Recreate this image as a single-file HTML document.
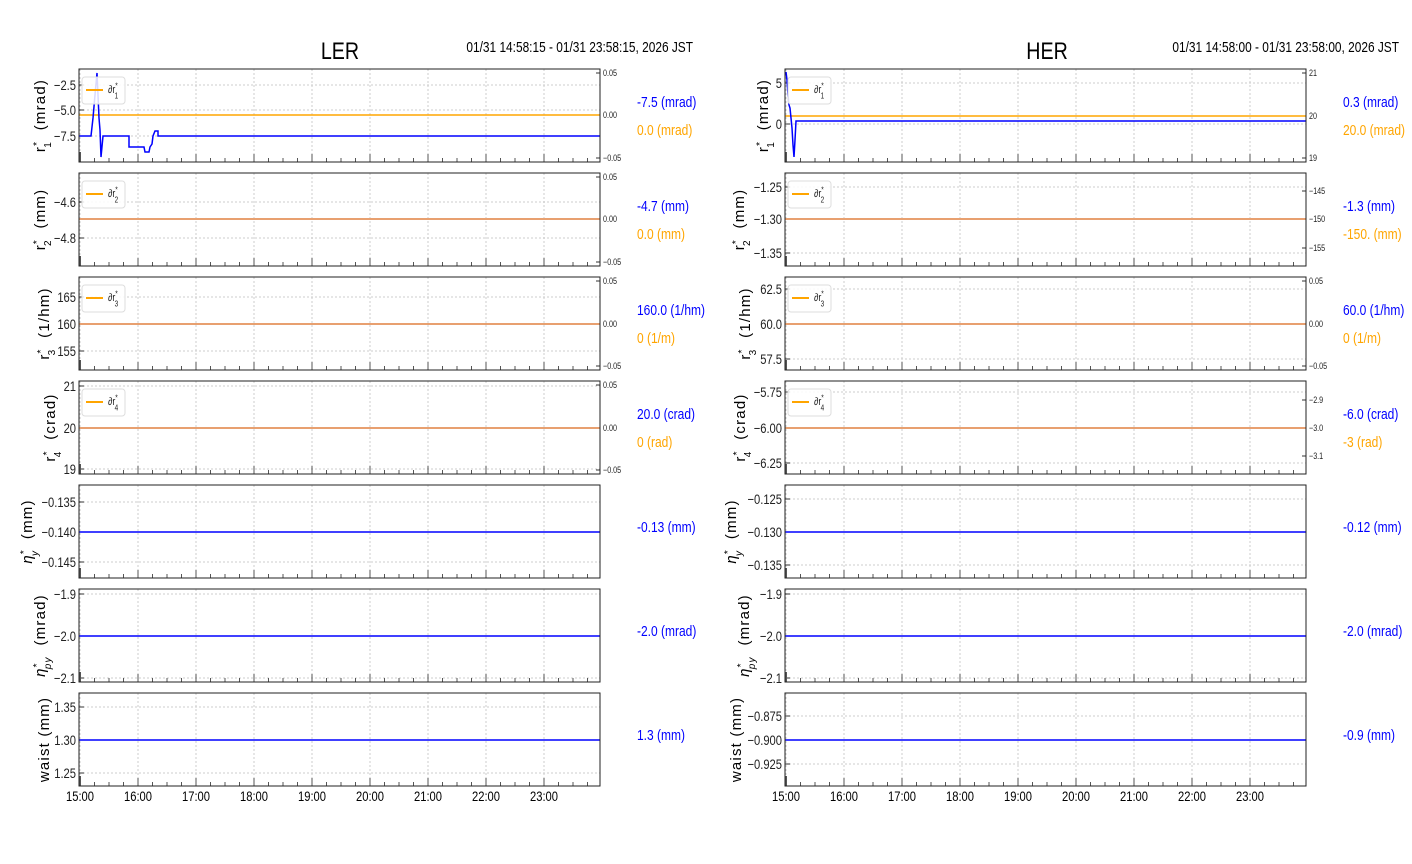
<!DOCTYPE html>
<html><head><meta charset="utf-8"><style>
html,body{margin:0;padding:0;background:#fff;width:1412px;height:864px;overflow:hidden}
svg text{font-family:"Liberation Sans",sans-serif}
</style></head><body>
<svg id="s" width="1412" height="864" xmlns="http://www.w3.org/2000/svg"></svg>
<script>
const S=document.getElementById('s');let h='';
function T(x,y,s,fs,anc,fill,sx){sx=sx||0.8;return `<g transform="translate(${x},${y}) scale(${sx},1)"><text x="0" y="0" font-size="${fs}" text-anchor="${anc||'start'}" fill="${fill||'#222'}">${s}</text></g>`;}
const tops=[69,173,277,381,485,589,693],H=93;
const sup='<tspan baseline-shift="super" font-size="10">*</tspan>';
function sub(n,it){return `<tspan dx="-7" baseline-shift="sub" font-size="10"${it?' font-style="italic"':''}>${n}</tspan>`;}
const sides=[
 {x0:79,x1:600,hx:80,title:'LER',tx:340,time:'01/31 14:58:15 - 01/31 23:58:15, 2026 JST',timex:693,vx:637,lxs:[40,40,44,50,27,40,44],
  p:[
   {lab:'r'+sup+sub(1)+'  (mrad)',yt:[['−2.5',85],['−5.0',110],['−7.5',136]],rt:[['0.05',73],['0.00',115],['−0.05',158]],leg:1,ly:115,v1:'-7.5 (mrad)',v2:'0.0 (mrad)'},
   {lab:'r'+sup+sub(2)+'  (mm)',yt:[['−4.6',202],['−4.8',238]],rt:[['0.05',177],['0.00',219],['−0.05',262]],leg:2,ly:219,v1:'-4.7 (mm)',v2:'0.0 (mm)'},
   {lab:'r'+sup+sub(3)+'  (1/hm)',yt:[['165',297],['160',324],['155',351]],rt:[['0.05',281],['0.00',324],['−0.05',366]],leg:3,ly:324,v1:'160.0 (1/hm)',v2:'0 (1/m)'},
   {lab:'r'+sup+sub(4)+'  (crad)',yt:[['21',386],['20',428],['19',469]],rt:[['0.05',385],['0.00',428],['−0.05',470]],leg:4,ly:428,v1:'20.0 (crad)',v2:'0 (rad)'},
   {lab:'<tspan font-style="italic">η</tspan>'+sup+sub('y',1)+'  (mm)',yt:[['−0.135',502],['−0.140',532],['−0.145',562]],by:532,v1:'-0.13 (mm)'},
   {lab:'<tspan font-style="italic">η</tspan>'+sup+sub('py',1)+'  (mrad)',yt:[['−1.9',594],['−2.0',636],['−2.1',678]],by:636,v1:'-2.0 (mrad)'},
   {lab:'waist (mm)',yt:[['1.35',707],['1.30',740],['1.25',773]],by:740,v1:'1.3 (mm)'}]},
 {x0:785,x1:1306,hx:786,title:'HER',tx:1047,time:'01/31 14:58:00 - 01/31 23:58:00, 2026 JST',timex:1399,vx:1343,lxs:[763,739,745,740,731,744,736],
  p:[
   {lab:'r'+sup+sub(1)+'  (mrad)',yt:[['5',83],['0',124]],rt:[['21',73],['20',116],['19',158]],leg:1,ly:116,v1:'0.3 (mrad)',v2:'20.0 (mrad)'},
   {lab:'r'+sup+sub(2)+'  (mm)',yt:[['−1.25',187],['−1.30',219],['−1.35',253]],rt:[['−145',191],['−150',219],['−155',248]],leg:2,ly:219,v1:'-1.3 (mm)',v2:'-150. (mm)'},
   {lab:'r'+sup+sub(3)+'  (1/hm)',yt:[['62.5',289],['60.0',324],['57.5',359]],rt:[['0.05',281],['0.00',324],['−0.05',366]],leg:3,ly:324,v1:'60.0 (1/hm)',v2:'0 (1/m)'},
   {lab:'r'+sup+sub(4)+'  (crad)',yt:[['−5.75',392],['−6.00',428],['−6.25',463]],rt:[['−2.9',400],['−3.0',428],['−3.1',456]],leg:4,ly:428,v1:'-6.0 (crad)',v2:'-3 (rad)'},
   {lab:'<tspan font-style="italic">η</tspan>'+sup+sub('y',1)+'  (mm)',yt:[['−0.125',499],['−0.130',532],['−0.135',565]],by:532,v1:'-0.12 (mm)'},
   {lab:'<tspan font-style="italic">η</tspan>'+sup+sub('py',1)+'  (mrad)',yt:[['−1.9',594],['−2.0',636],['−2.1',678]],by:636,v1:'-2.0 (mrad)'},
   {lab:'waist (mm)',yt:[['−0.875',716],['−0.900',740],['−0.925',764]],by:740,v1:'-0.9 (mm)'}]}];
const hrs=['15:00','16:00','17:00','18:00','19:00','20:00','21:00','22:00','23:00'];
sides.forEach((sd,si)=>{
 h+=T(sd.tx,59,sd.title,24,'middle','#000',0.82);
 h+=T(sd.timex,52,sd.time,14.5,'end','#000',0.82);
 sd.p.forEach((p,i)=>{
  const t=tops[i],b=t+H,x0=sd.x0,x1=sd.x1;
  for(let k=0;k<9;k++){const gx=sd.hx+k*58;h+=`<line x1="${gx}" y1="${t}" x2="${gx}" y2="${b}" stroke="#ccc" stroke-width="1" stroke-dasharray="2,2"/>`;}
  p.yt.forEach(y=>{h+=`<line x1="${x0}" y1="${y[1]}" x2="${x1}" y2="${y[1]}" stroke="#ccc" stroke-width="1" stroke-dasharray="2,2"/>`;
   h+=`<line x1="${x0}" y1="${y[1]}" x2="${x0+5}" y2="${y[1]}" stroke="#333"/>`;
   h+=T(x0-3,y[1]+5,y[0],14,'end','#222',0.8);});
  for(let k=0;k<36;k++){const gx=sd.hx+k*14.5;const L=k%4==0?8:4;h+=`<line x1="${gx}" y1="${b}" x2="${gx}" y2="${b-L}" stroke="#555"/>`;}
  h+=`<line x1="${x0+1}" y1="${b}" x2="${x0+1}" y2="${b-10}" stroke="#555" stroke-width="2"/>`;
  if(p.rt){
   p.rt.forEach(r=>{h+=`<line x1="${x1}" y1="${r[1]}" x2="${x1-4}" y2="${r[1]}" stroke="#333"/>`+T(x1+3,r[1]+3,r[0],9,'start','#222',0.8);});
   if(i==0){
    h+=`<line x1="${x0}" y1="${p.ly}" x2="${x1}" y2="${p.ly}" stroke="#ffa500" stroke-width="1.5"/>`;
    if(si==0)h+=`<polyline fill="none" stroke="#0000ff" stroke-width="1.5" points="79,136 91,136 93,118 95,95 97,73 98,95 99,118 100,130 101,157 103,136 129,136 129,147 144,147 145,152 149,152 150,147 152,144 153,136 155,131 158,131 158,136 600,136"/>`;
    else h+=`<polyline fill="none" stroke="#0000ff" stroke-width="1.5" points="786,72 787,80 788,95 789,105 790,108 791,118 792,128 793,145 794,157 795,140 796,121 1306,121"/>`;
   } else {
    h+=`<line x1="${x0}" y1="${p.ly}" x2="${x1}" y2="${p.ly}" stroke="#e8a070" stroke-width="2"/>`;
   }
   h+=`<rect x="${x0+3}" y="${t+8}" width="43" height="27" rx="3" fill="#fff" fill-opacity="0.85" stroke="#ddd"/>`;
   h+=`<line x1="${x0+7}" y1="${t+21}" x2="${x0+24}" y2="${t+21}" stroke="#ffa500" stroke-width="2"/>`;
   h+=T(x0+29,t+24,`∂r<tspan baseline-shift="super" font-size="8">*</tspan><tspan dx="-4" baseline-shift="sub" font-size="8">${p.leg}</tspan>`,11,'start','#222',0.8);
   h+=T(sd.vx,t+38,p.v1,15,'start','#0000ff',0.8);
   h+=T(sd.vx,t+66,p.v2,15,'start','#ffa500',0.8);
  } else {
   h+=`<line x1="${x0}" y1="${p.by}" x2="${x1}" y2="${p.by}" stroke="#0000ff" stroke-width="1.5"/>`;
   h+=T(sd.vx,t+47,p.v1,15,'start','#0000ff',0.8);
  }
  h+=`<rect x="${x0}" y="${t}" width="${x1-x0}" height="${H}" fill="none" stroke="#222" stroke-width="1"/>`;
  const cy=t+H/2;
  h+=`<text transform="translate(${sd.lxs[i]+5},${cy}) rotate(-90)" font-size="15" letter-spacing="1.2" text-anchor="middle" fill="#000" font-family="DejaVu Sans,sans-serif" xml:space="preserve">${p.lab}</text>`;
 });
 hrs.forEach((s,k)=>{h+=T(sd.hx+k*58,801,s,14,'middle','#000',0.8);});
});
S.innerHTML=h;
</script>
</body></html>
